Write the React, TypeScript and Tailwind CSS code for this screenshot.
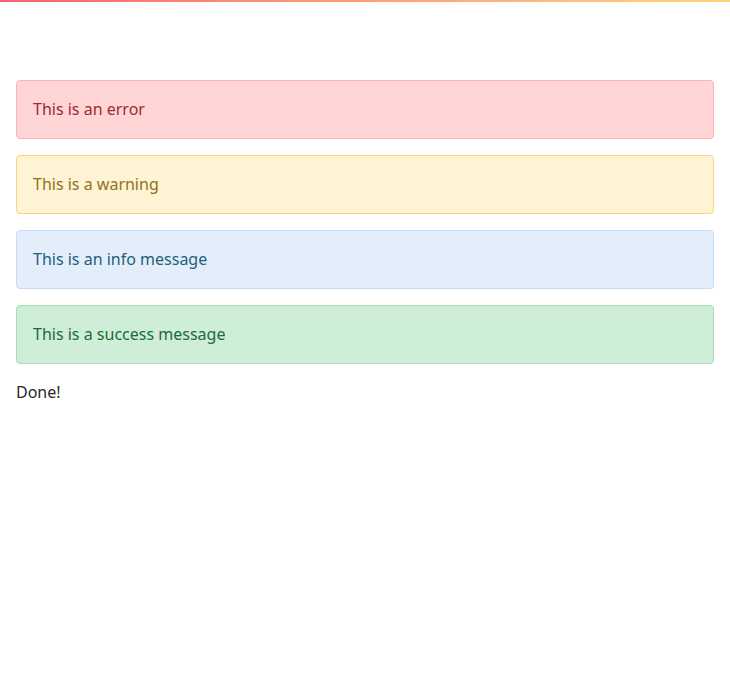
import React from "react";

const alerts = [
  { text: "This is an error", cls: "bg-[#ffd5d6] border-[#fdb3b5] text-[#9d2a30]" },
  { text: "This is a warning", cls: "bg-[#fef4d4] border-[#f9d67a] text-[#92701f]" },
  { text: "This is an info message", cls: "bg-[#e3eefa] border-[#c6dcf4] text-[#1d5f7e]" },
  { text: "This is a success message", cls: "bg-[#ceeed8] border-[#a8dbb8] text-[#1c6b38]" },
];

export default function App() {
  return (
    <div className="min-h-[684px] w-full bg-white" style={{ fontFamily: '"Noto Sans", "Open Sans", sans-serif' }}>
      <div className="h-[2px] w-full bg-gradient-to-r from-[#f6636f] to-[#fdd57e]" />
      <div className="px-4 pt-[78px] flex flex-col gap-4">
        {alerts.map((a) => (
          <div key={a.text} className={`border rounded-[4px] px-4 py-4 text-[16px] leading-[25px] ${a.cls}`}>
            {a.text}
          </div>
        ))}
        <div className="text-[16px] leading-[24px] text-[#262730]">Done!</div>
      </div>
    </div>
  );
}
